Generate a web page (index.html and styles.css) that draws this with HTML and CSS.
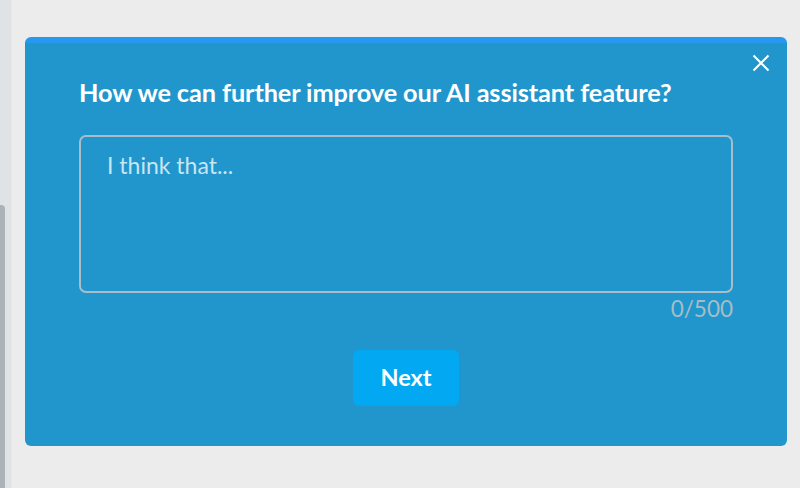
FILE: index.html
```html
<!DOCTYPE html>
<html lang="en">
<head>
<meta charset="utf-8">
<title>Survey</title>
<link rel="stylesheet" href="styles.css">
</head>
<body>
<div class="page">
  <aside class="side"><div class="side-bar"></div></aside>
  <main class="stage">
    <section class="survey">
      <button class="close" aria-label="Close">
        <svg width="18" height="18" viewBox="0 0 18 18"><path d="M1.5 1.5 L16.5 16.5 M16.5 1.5 L1.5 16.5" stroke="#fff" stroke-width="2" fill="none"/></svg>
      </button>
      <h2 class="question">How we can further improve our AI assistant feature?</h2>
      <div class="field">
        <textarea class="answer" placeholder="I think that..."></textarea>
        <div class="count">0/500</div>
      </div>
      <div class="actions"><button class="next">Next</button></div>
    </section>
  </main>
</div>
</body>
</html>
```
FILE: styles.css
```css
* { box-sizing: border-box; }
html, body { margin: 0; padding: 0; }
body {
  background: #ececec;
  font-family: Lato, "Open Sans", sans-serif;
  width: 800px;
  height: 488px;
  overflow: hidden;
}
.page { display: flex; height: 488px; }
.side {
  width: 12px;
  flex: none;
  background: #dfe3e6;
  border-right: 1px solid #e6e9eb;
  display: flex;
  flex-direction: column;
  justify-content: flex-end;
}
.side-bar {
  width: 5px;
  height: 283px;
  background: #abb2b8;
  border-top-right-radius: 4px;
}
.stage {
  flex: 1;
  padding: 37px 13px 0 13px;
}
.survey {
  position: relative;
  background: #2196cc;
  border-top: 6px solid #2699ee;
  border-radius: 6px;
  height: 409px;
  padding: 34px 54px 0 54px;
}
.close {
  position: absolute;
  top: 11px;
  right: 17px;
  width: 18px;
  height: 18px;
  padding: 0;
  border: 0;
  background: none;
  display: flex;
}
.question {
  margin: 0;
  color: #fff;
  font-size: 25.3px;
  font-weight: 700;
  line-height: 30px;
  letter-spacing: -0.1px;
}
.field { margin-top: 28px; }
.answer {
  display: block;
  width: 654px;
  height: 158px;
  resize: none;
  background: transparent;
  border: 2px solid #a9bdc8;
  border-radius: 7px;
  padding: 14px 26px;
  font-family: Lato, sans-serif;
  font-size: 23px;
  line-height: 28px;
  color: #fff;
  outline: none;
}
.answer::placeholder { color: #c8e5f4; opacity: 1; }
.count {
  width: 654px;
  text-align: right;
  color: #a8bcc6;
  font-size: 22.5px;
  line-height: 28px;
  margin-top: 2px;
}
.actions {
  display: flex;
  justify-content: center;
  width: 654px;
  margin-top: 27px;
}
.next {
  width: 106px;
  height: 56px;
  border: 0;
  border-radius: 6px;
  background: #03a8f2;
  color: #fff;
  font-family: Lato, sans-serif;
  font-weight: 700;
  font-size: 23.5px;
  padding: 0 0 2px;
}
```
